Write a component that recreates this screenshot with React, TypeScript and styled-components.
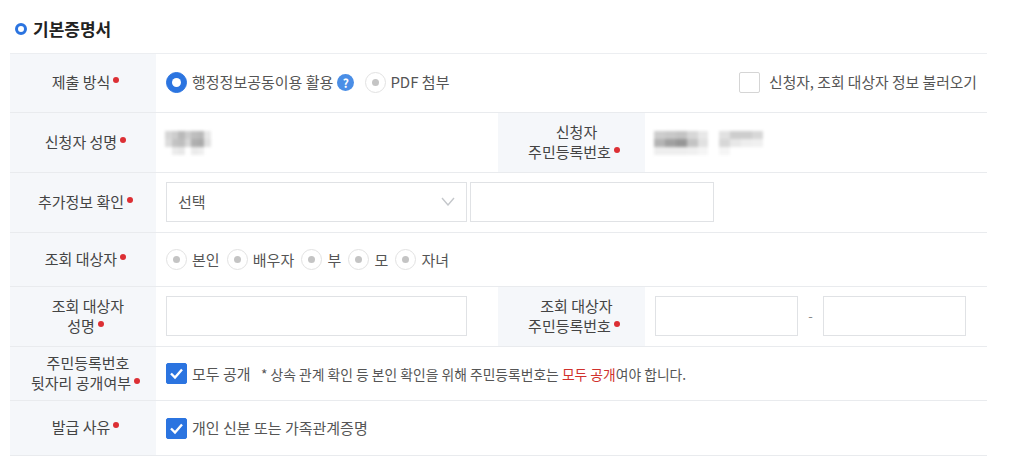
import React from 'react'
import styled, { createGlobalStyle } from 'styled-components'

const GlobalStyle = createGlobalStyle`
  html, body { margin: 0; padding: 0; background: #fff; }
  body {
    font-family: 'Noto Sans CJK KR', 'Noto Sans', sans-serif;
    color: #444;
    width: 1024px;
    height: 464px;
    overflow: hidden;
  }
`

const Page = styled.div`
  padding: 0 37px 0 10px;
`

const TitleRow = styled.div`
  height: 53px;
  display: flex;
  align-items: center;
  gap: 6px;
  padding: 4px 0 0 5px;
  box-sizing: border-box;
`

const TitleDot = styled.span`
  width: 12px;
  height: 12px;
  box-sizing: border-box;
  border: 3.5px solid #2b74e0;
  border-radius: 50%;
`

const Title = styled.h2`
  margin: 0;
  font-size: 17px;
  font-weight: 700;
  color: #222;
  line-height: 1;
`

const Table = styled.div`
  border-top: 1px solid #eceef1;
`

const Row = styled.div<{ $h: number }>`
  display: grid;
  grid-template-columns: 146px 342px 147px 1fr;
  height: ${(p) => p.$h}px;
  box-sizing: border-box;
  border-bottom: 1px solid #e9ebee;
`

const Label = styled.div`
  background: #f5f7fa;
  display: flex;
  align-items: center;
  justify-content: center;
  text-align: center;
  font-size: 15px;
  line-height: 20px;
  color: #444;
  padding: 0 0 2px 10px;
  box-sizing: border-box;
  white-space: nowrap;
`

const Req = styled.span`
  display: inline-block;
  width: 6px;
  height: 6px;
  border-radius: 50%;
  background: #dc2f34;
  margin: 0 5px 0 3px;
  vertical-align: 5px;
`

const Cell = styled.div<{ $span?: number; $between?: boolean; $lift?: boolean }>`
  grid-column: span ${(p) => p.$span || 1};
  display: flex;
  align-items: center;
  justify-content: ${(p) => (p.$between ? 'space-between' : 'flex-start')};
  padding: 0 10px ${(p) => (p.$lift ? 2 : 0)}px;
  font-size: 15px;
  color: #555;
  box-sizing: border-box;
`

const OptionGroup = styled.div`
  display: flex;
  align-items: center;
`

const Option = styled.label<{ $gap?: number; $spread?: number; $size?: number }>`
  display: flex;
  align-items: center;
  gap: ${(p) => p.$spread ?? 5}px;
  margin-right: ${(p) => p.$gap ?? 7.2}px;
  font-size: ${(p) => p.$size ?? 15}px;
  line-height: 22px;
  white-space: nowrap;
`

const Radio = styled.span<{ $on?: boolean }>`
  width: 21px;
  height: 21px;
  border-radius: 50%;
  box-sizing: border-box;
  flex: none;
  display: flex;
  align-items: center;
  justify-content: center;
  background: ${(p) => (p.$on ? '#2b74e0' : '#fff')};
  border: ${(p) => (p.$on ? '1px solid #2b74e0' : '1.5px solid #e2e2e2')};
  &::after {
    content: '';
    width: ${(p) => (p.$on ? 9 : 7)}px;
    height: ${(p) => (p.$on ? 9 : 7)}px;
    border-radius: 50%;
    background: ${(p) => (p.$on ? '#fff' : '#c4c4c4')};
  }
`

const Help = styled.span`
  width: 17px;
  height: 17px;
  border-radius: 50%;
  background: #4a8ee6;
  color: #fff;
  font-size: 12px;
  font-weight: 700;
  line-height: 17px;
  text-align: center;
  margin-left: -1px;
`

const CheckBox = styled.span<{ $on?: boolean }>`
  width: 21px;
  height: 21px;
  border-radius: 2px;
  box-sizing: border-box;
  flex: none;
  display: flex;
  align-items: center;
  justify-content: center;
  background: ${(p) => (p.$on ? '#2b74e0' : '#fff')};
  border: 1px solid ${(p) => (p.$on ? '#2b74e0' : '#d5d5d5')};
`

const Field = styled.input<{ $w: number }>`
  width: ${(p) => p.$w}px;
  height: 40px;
  box-sizing: border-box;
  border: 1px solid #e0e2e5;
  background: #fff;
  outline: none;
  flex: none;
`

const SelectBox = styled.div`
  width: 301px;
  height: 40px;
  box-sizing: border-box;
  border: 1px solid #e0e2e5;
  display: flex;
  align-items: center;
  justify-content: space-between;
  padding: 0 11px;
  margin-right: 3px;
  flex: none;
`

const Dash = styled.span`
  width: 25px;
  text-align: center;
  color: #888;
  font-size: 13px;
  flex: none;
`

const Note = styled.span`
  font-size: 13.8px;
  margin-left: 10.5px;
  white-space: nowrap;
`

const Hot = styled.span`
  color: #d0312d;
`

const Mosaic = styled.div<{ $cols: number; $w: number }>`
  display: grid;
  grid-template-columns: repeat(${(p) => p.$cols}, 1fr);
  grid-auto-rows: 8px;
  width: ${(p) => p.$w}px;
  margin-left: -1px;
  filter: blur(1.6px);
`

const Tile = styled.i<{ $v: number }>`
  display: block;
  background: ${(p) => `rgb(${p.$v},${p.$v},${p.$v})`};
`

const nameTiles = [
  214, 205, 185, 205, 190, 185, 232,
  220, 195, 190, 215, 175, 170, 225,
  255, 235, 232, 255, 235, 238, 255,
]
const idTiles = [
  205, 200, 195, 215, 232, 255, 225, 205, 205, 215,
  180, 160, 150, 195, 225, 255, 215, 232, 238, 240,
  238, 238, 238, 240, 245, 255, 245, 255, 255, 255,
]

const Check = () => (
  <svg width="15" height="13" viewBox="0 0 15 13" fill="none">
    <path d="M2 6.5 L6 10.5 L13 2.5" stroke="#fff" strokeWidth="2.4" />
  </svg>
)

const Chevron = () => (
  <svg width="14" height="9" viewBox="0 0 14 9" fill="none">
    <path d="M1 1 L7 8 L13 1" stroke="#c4c7cb" strokeWidth="1.4" />
  </svg>
)

export default function App() {
  return (
    <>
      <GlobalStyle />
      <Page>
        <TitleRow>
          <TitleDot />
          <Title>기본증명서</Title>
        </TitleRow>
        <Table>
          <Row $h={59}>
            <Label><span>제출 방식<Req /></span></Label>
            <Cell $span={3} $between $lift>
              <OptionGroup>
                <Option $gap={11}>
                  <Radio $on />
                  <span>행정정보공동이용 활용</span>
                  <Help>?</Help>
                </Option>
                <Option $spread={4}>
                  <Radio />
                  <span>PDF 첨부</span>
                </Option>
              </OptionGroup>
              <Option $gap={0} $spread={9} $size={14.8}>
                <CheckBox />
                <span>신청자, 조회 대상자 정보 불러오기</span>
              </Option>
            </Cell>
          </Row>
          <Row $h={60}>
            <Label><span>신청자 성명<Req /></span></Label>
            <Cell>
              <Mosaic $cols={7} $w={46}>
                {nameTiles.map((v, i) => <Tile key={i} $v={v} />)}
              </Mosaic>
            </Cell>
            <Label><span>신청자<br />주민등록번호<Req /></span></Label>
            <Cell>
              <Mosaic $cols={10} $w={109}>
                {idTiles.map((v, i) => <Tile key={i} $v={v} />)}
              </Mosaic>
            </Cell>
          </Row>
          <Row $h={60}>
            <Label><span>추가정보 확인<Req /></span></Label>
            <Cell $span={3} $lift>
              <SelectBox>
                <span>선택</span>
                <Chevron />
              </SelectBox>
              <Field $w={244} />
            </Cell>
          </Row>
          <Row $h={54}>
            <Label><span>조회 대상자<Req /></span></Label>
            <Cell $span={3}>
              <OptionGroup>
                <Option><Radio /><span>본인</span></Option>
                <Option><Radio /><span>배우자</span></Option>
                <Option><Radio /><span>부</span></Option>
                <Option><Radio /><span>모</span></Option>
                <Option><Radio /><span>자녀</span></Option>
              </OptionGroup>
            </Cell>
          </Row>
          <Row $h={60}>
            <Label><span>조회 대상자<br />성명<Req /></span></Label>
            <Cell $lift><Field $w={301} /></Cell>
            <Label><span>조회 대상자<br />주민등록번호<Req /></span></Label>
            <Cell $lift>
              <Field $w={143} />
              <Dash>-</Dash>
              <Field $w={143} />
            </Cell>
          </Row>
          <Row $h={54}>
            <Label><span>주민등록번호<br />뒷자리 공개여부<Req /></span></Label>
            <Cell $span={3}>
              <Option $gap={0}>
                <CheckBox $on><Check /></CheckBox>
                <span>모두 공개</span>
              </Option>
              <Note>* 상속 관계 확인 등 본인 확인을 위해 주민등록번호는 <Hot>모두 공개</Hot>여야 합니다.</Note>
            </Cell>
          </Row>
          <Row $h={55}>
            <Label><span>발급 사유<Req /></span></Label>
            <Cell $span={3}>
              <Option $gap={0}>
                <CheckBox $on><Check /></CheckBox>
                <span>개인 신분 또는 가족관계증명</span>
              </Option>
            </Cell>
          </Row>
        </Table>
      </Page>
    </>
  )
}
